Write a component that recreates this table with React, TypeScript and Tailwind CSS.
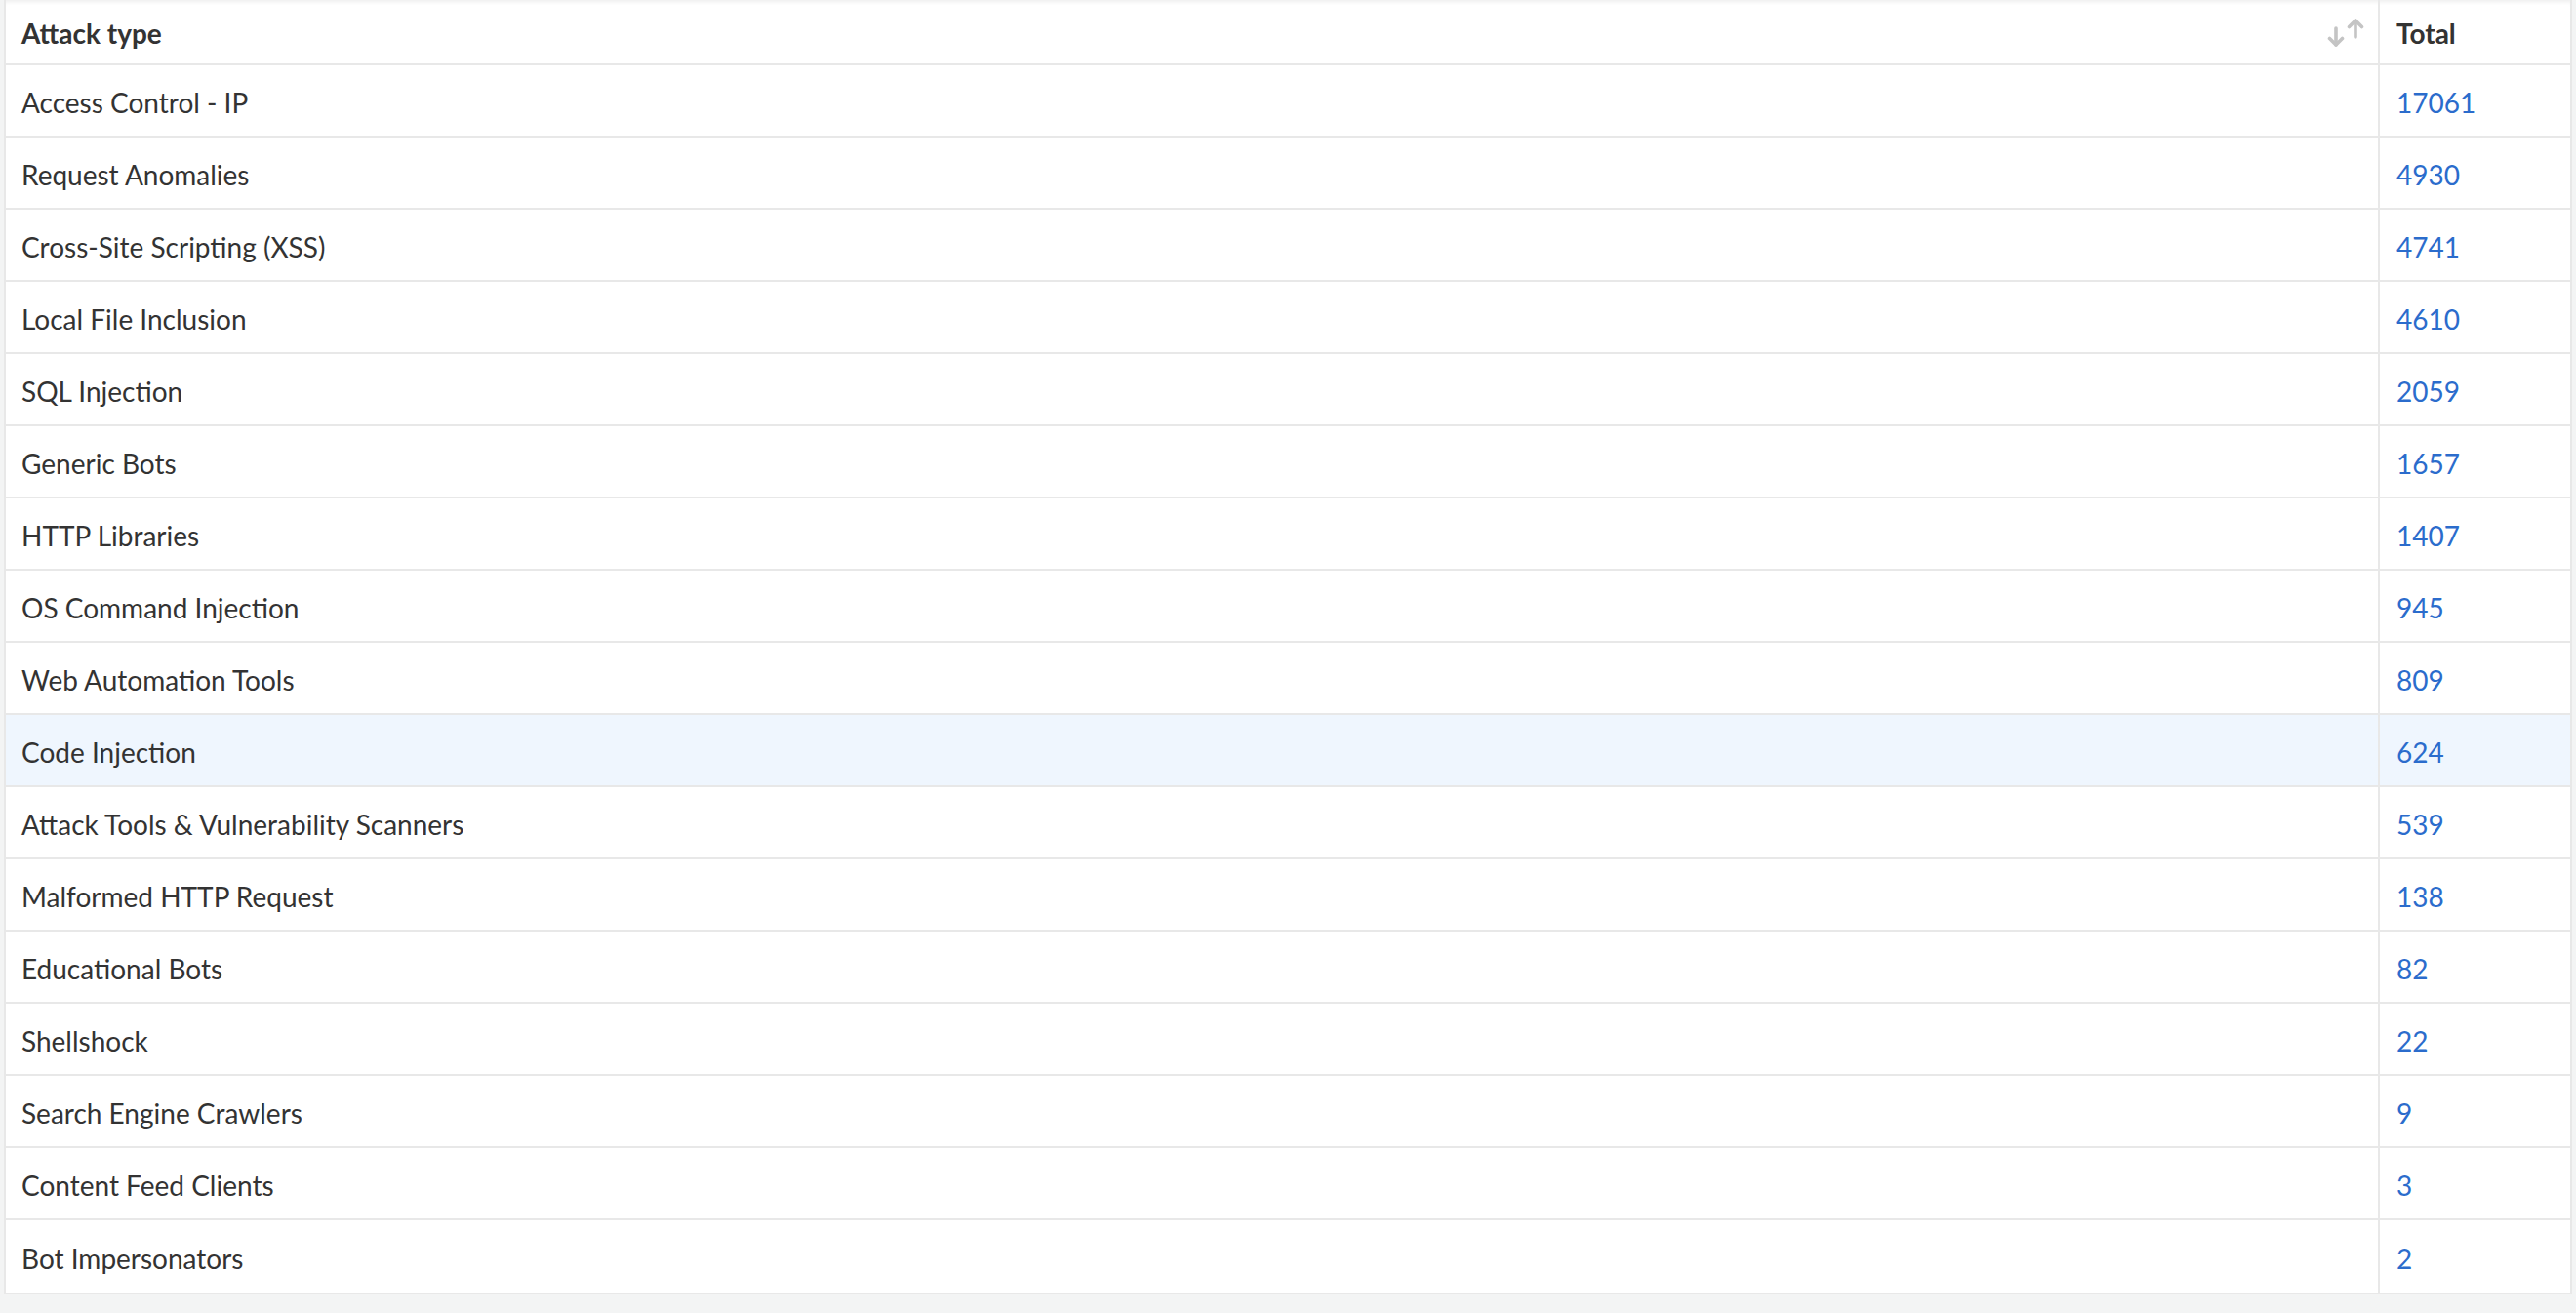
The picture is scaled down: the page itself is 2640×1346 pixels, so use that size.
import React from "react";

const rows: [string, number][] = [
  ["Access Control - IP", 17061],
  ["Request Anomalies", 4930],
  ["Cross-Site Scripting (XSS)", 4741],
  ["Local File Inclusion", 4610],
  ["SQL Injection", 2059],
  ["Generic Bots", 1657],
  ["HTTP Libraries", 1407],
  ["OS Command Injection", 945],
  ["Web Automation Tools", 809],
  ["Code Injection", 624],
  ["Attack Tools & Vulnerability Scanners", 539],
  ["Malformed HTTP Request", 138],
  ["Educational Bots", 82],
  ["Shellshock", 22],
  ["Search Engine Crawlers", 9],
  ["Content Feed Clients", 3],
  ["Bot Impersonators", 2],
];

function SortIcon() {
  return (
    <svg width="38" height="30" viewBox="0 0 38 30" fill="none" stroke="#c4c4c4" strokeWidth="3.6" strokeLinecap="round" strokeLinejoin="round">
      <path d="M9 10 L9 27" />
      <path d="M2.5 20.5 L9 27 L15.5 20.5" />
      <path d="M29 2 L29 19" />
      <path d="M22.5 8.5 L29 2 L35.5 8.5" />
    </svg>
  );
}

export default function App() {
  return (
    <div
      className="w-[2640px] h-[1346px] bg-[#f3f4f4] px-[4px] pb-[21px]"
      style={{ fontFamily: "Lato, 'Open Sans', sans-serif" }}
    >
      <div className="border-x-2 border-b-2 border-[#e8e8e8] bg-white text-[#333333] text-[28px]">
        <div className="flex h-[67px] border-b-2 border-[#e8e8e8] font-bold shadow-[inset_0_5px_4px_-3px_rgba(0,0,0,0.07)]">
          <div className="flex-1 flex items-center justify-between pl-[16px] pr-[14px] pt-[2px] border-r-2 border-[#e8e8e8]">
            <span>Attack type</span>
            <SortIcon />
          </div>
          <div className="w-[195px] flex items-center pl-[17px] pt-[2px]">Total</div>
        </div>
        {rows.map(([name, total], i) => (
          <div
            key={name}
            className={
              "flex h-[74px] border-b-2 border-[#e8e8e8] last:border-b-0 " +
              (i === 9 ? "bg-[#eff6fe]" : "bg-white")
            }
          >
            <div className="flex-1 flex items-center pl-[16px] pt-[3px] border-r-2 border-[#e8e8e8]">
              {name}
            </div>
            <div className="w-[195px] flex items-center pl-[17px] pt-[3px] text-[#2b6ccc]">
              {total}
            </div>
          </div>
        ))}
      </div>
    </div>
  );
}
